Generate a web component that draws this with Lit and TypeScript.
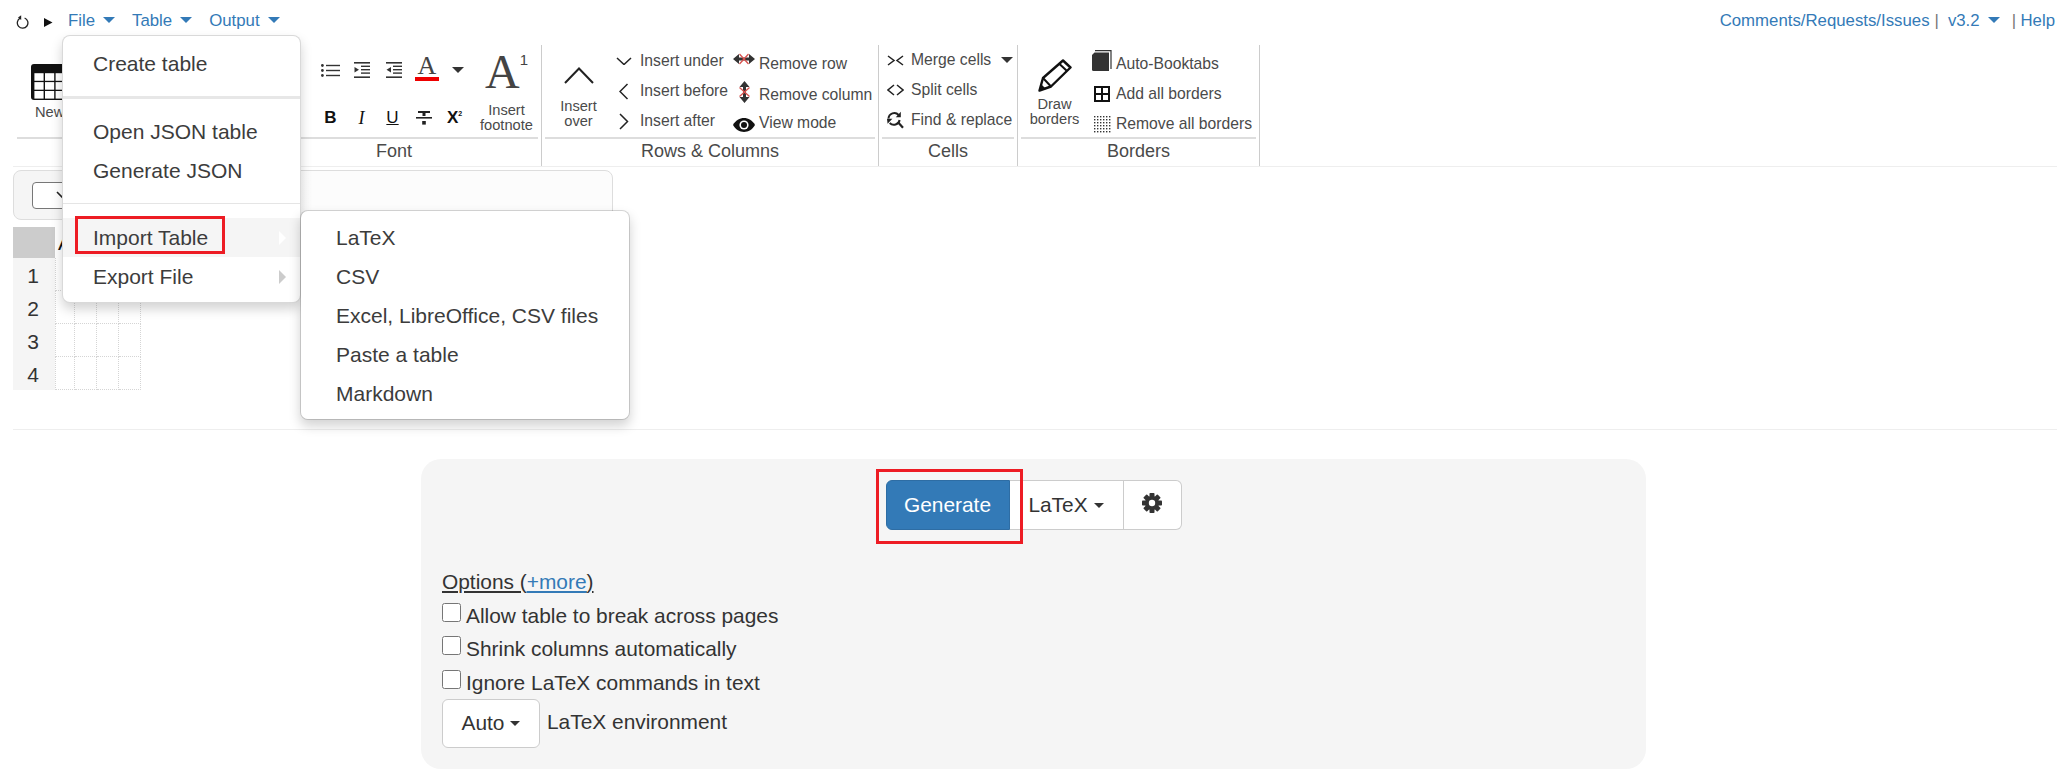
import { LitElement, html, svg, css } from "lit";
import { customElement } from "lit/decorators.js";

const stroke = "#222";

const chevron = (d: string, w: number, h: number, sw = 1.5) => html`<svg width=${w} height=${h} viewBox="0 0 ${w} ${h}">
  <path d=${d} fill="none" stroke=${stroke} stroke-width=${sw} />
</svg>`;

const caret = (cls = "") => html`<i class="caret ${cls}"></i>`;

const undoIcon = html`<svg width="13" height="14" viewBox="0 0 13 14">
  <path d="M4.2 3.2A5.3 5.3 0 1 0 8.6 3" fill="none" stroke="#222" stroke-width="1.3" />
  <path d="M5.2 0.3V5L2 2.6Z" fill="#222" />
</svg>`;

const playIcon = html`<svg width="9" height="9" viewBox="0 0 9 9"><path d="M0 0L8.5 4.5L0 9Z" fill="#111" /></svg>`;

const tableIcon = html`<svg width="46" height="36" viewBox="0 0 46 36">
  <rect width="46" height="36" rx="3" fill="#111" />
  ${[0, 1, 2, 3].map((c) =>
    [0, 1, 2].map(
      (r) => svg`<rect x=${3.4 + c * 10.6} y=${9.2 + r * 8.9} width="9.2" height="7.6" fill="#fff" />`
    )
  )}
</svg>`;

const listIcon = html`<svg width="19" height="13" viewBox="0 0 19 13">
  ${[1.5, 6.5, 11.5].map(
    (y) => svg`<circle cx="1.4" cy=${y} r="1.4" fill="#333" /><rect x="5" y=${y - 0.7} width="14" height="1.4" fill="#333" />`
  )}
</svg>`;

const indentLines = svg`
  <rect x="0" y="0" width="16" height="1.6" fill="#333" />
  <rect x="7" y="3.6" width="9" height="1.4" fill="#333" />
  <rect x="7" y="7" width="9" height="1.4" fill="#333" />
  <rect x="7" y="10.4" width="9" height="1.4" fill="#333" />
  <rect x="0" y="14.4" width="16" height="1.6" fill="#333" />
`;

const indentIcon = html`<svg width="16" height="16" viewBox="0 0 16 16">
  ${indentLines}<path d="M0.5 5L5 7.8L0.5 10.6Z" fill="#333" />
</svg>`;

const outdentIcon = html`<svg width="16" height="16" viewBox="0 0 16 16">
  ${indentLines}<path d="M5 5L0.5 7.8L5 10.6Z" fill="#333" />
</svg>`;

const strikeIcon = html`<svg width="16" height="15" viewBox="0 0 16 15">
  <rect x="2" y="0" width="12" height="2" fill="#222" />
  <rect x="6.5" y="2" width="3" height="3" fill="#222" />
  <rect x="0" y="6" width="16" height="1.6" fill="#222" />
  <rect x="6.2" y="10" width="3.6" height="3.6" fill="#222" />
</svg>`;

const removeRowIcon = html`<svg width="22" height="12" viewBox="0 0 22 12">
  <path d="M0 6L6 1V4.5H16V1L22 6L16 11V7.5H6V11Z" fill="#333" />
  <path d="M6.5 1L15.5 11M15.5 1L6.5 11" stroke="#d9534f" stroke-width="1.3" />
</svg>`;

const removeColIcon = html`<svg width="13" height="22" viewBox="0 0 13 22">
  <path d="M6.5 0L11.5 6H8V16H11.5L6.5 22L1.5 16H5V6H1.5Z" fill="#333" />
  <path d="M1.5 6.5L11.5 15.5M11.5 6.5L1.5 15.5" stroke="#d9534f" stroke-width="1.3" />
</svg>`;

const eyeIcon = html`<svg width="22" height="14" viewBox="0 0 22 14">
  <path d="M0 7C5 -2.2 17 -2.2 22 7C17 16.2 5 16.2 0 7Z" fill="#111" />
  <circle cx="11" cy="7" r="4.6" fill="#fff" />
  <circle cx="11" cy="7" r="3" fill="#111" />
</svg>`;

const findIcon = html`<svg width="17" height="18" viewBox="0 0 17 18">
  <path d="M1.5 7.5A5.8 5.8 0 0 1 11.6 4M12.6 9A5.8 5.8 0 0 1 2.7 12" fill="none" stroke="#222" stroke-width="2" />
  <path d="M13.8 0.8V6.2H8.8Z" fill="#222" />
  <path d="M0 7.8H5.4L0.6 12.8Z" fill="#222" />
  <path d="M10.8 11L16 16.8" stroke="#222" stroke-width="2.2" />
</svg>`;

const pencilIcon = html`<svg width="34" height="33" viewBox="0 0 34 33">
  <path d="M1.5 31.5L5 19L25 1.5L32.5 8.5L13 27.5Z" fill="none" stroke="#111" stroke-width="2.4" stroke-linejoin="round" />
  <path d="M21.5 5L29 12M5 19L13 27.5" fill="none" stroke="#111" stroke-width="2" />
  <path d="M1.5 31.5L3 25L8 30Z" fill="#111" />
</svg>`;

const bookIcon = html`<svg width="20" height="21" viewBox="0 0 20 21">
  <path d="M3 0.7H19V19" fill="none" stroke="#333" stroke-width="1.2" />
  <path d="M2.5 2.6H17V21H1.5A1.5 1.5 0 0 1 0 19.5V5Z" fill="#333" />
</svg>`;

const gridIcon = html`<svg width="16" height="16" viewBox="0 0 16 16">
  <path d="M1 1H15V15H1ZM8 1V15M1 8H15" fill="none" stroke="#111" stroke-width="2" />
</svg>`;

const dotsIcon = html`<svg width="17" height="17" viewBox="0 0 17 17">
  ${[0, 1, 2, 3, 4, 5].map((r) =>
    [0, 1, 2, 3, 4, 5].map(
      (c) => svg`<rect x=${c * 3} y=${r * 3} width="1.4" height="1.4" fill="#333" />`
    )
  )}
</svg>`;

const gearIcon = html`<svg width="20" height="20" viewBox="0 0 20 20">
  ${[0, 45, 90, 135].map(
    (a) => svg`<rect x="7.5" y="0" width="5" height="20" rx="0.8" fill="#333" transform="rotate(${a} 10 10)" />`
  )}
  <circle cx="10" cy="10" r="7" fill="#333" />
  <circle cx="10" cy="10" r="3.2" fill="#fff" />
</svg>`;

@customElement("app-root")
export class AppRoot extends LitElement {
  static styles = css`
    :host {
      display: block;
      position: relative;
      width: 2070px;
      height: 784px;
      overflow: hidden;
      background: #fff;
      color: #333;
      font-family: "Liberation Sans", Arial, sans-serif;
    }
    a {
      color: #337ab7;
      text-decoration: none;
    }
    i.caret {
      display: inline-block;
      width: 0;
      height: 0;
      border-style: solid;
      border-color: #333 transparent transparent;
      border-width: 6px 6px 0;
    }
    i.caret.blue {
      border-top-color: #337ab7;
      margin-left: 8px;
      vertical-align: 3px;
    }
    i.caret.sm {
      border-width: 5px 5px 0;
      margin-left: 6px;
      vertical-align: 3px;
    }

    /* top bar */
    .topbar {
      height: 45px;
      display: flex;
      align-items: flex-start;
      padding: 13px 15px 0 16px;
      box-sizing: border-box;
      font-size: 16.8px;
      line-height: 16px;
    }
    .undo {
      display: flex;
      margin: 2px 15px 0 0;
    }
    .play {
      display: flex;
      margin: 5px 15px 0 0;
    }
    .topmenu {
      display: flex;
      gap: 17px;
    }
    .topright {
      margin-left: auto;
      display: flex;
    }
    .sep {
      color: #777;
      margin: 0 9px 0 5px;
    }
    .sep.tight {
      margin: 0 4.5px 0 12px;
    }

    /* ribbon */
    .ribbon {
      display: flex;
      height: 121px;
      margin: 0 13px;
      border-bottom: 1px solid #eee;
      color: #4a4a4a;
    }
    .group {
      display: flex;
      flex-direction: column;
      box-sizing: border-box;
      padding: 0 3px;
      border-right: 1px solid #ccc;
      font-size: 15.7px;
    }
    .g-first {
      width: 237px;
      border-right: none;
      padding: 0 0 0 4px;
    }
    .g-font {
      width: 292px;
      padding-left: 0;
    }
    .g-rows {
      width: 337px;
    }
    .g-cells {
      width: 139px;
    }
    .g-borders {
      width: 242px;
    }
    .g-body {
      height: 92px;
      display: flex;
      border-bottom: 2px solid #ddd;
      box-sizing: content-box;
    }
    .g-label {
      text-align: center;
      font-size: 18px;
      line-height: 25px;
      height: 25px;
    }
    .newbtn {
      display: flex;
      flex-direction: column;
      padding: 19px 0 0 14px;
      font-size: 14.67px;
      line-height: 16px;
      gap: 4px;
    }
    .newbtn span {
      padding-left: 4px;
    }
    .font-left {
      display: flex;
      flex-direction: column;
      padding-left: 65px;
    }
    .font-row1 {
      display: flex;
      align-items: center;
      height: 47px;
      padding: 3px 0 0 6px;
      box-sizing: border-box;
    }
    .font-row1 .list {
      margin-right: 14px;
      display: flex;
    }
    .font-row1 .ind {
      margin-right: 16px;
      display: flex;
    }
    .color-a {
      width: 24px;
      margin: -6px 13px 0 -1px;
      font-family: "Liberation Serif", serif;
      font-size: 26px;
      line-height: 23px;
      text-align: center;
      color: #444;
      border-bottom: 4px solid #e00;
    }
    .font-row2 {
      display: grid;
      grid-template-columns: repeat(5, 31px);
      align-items: center;
      justify-items: center;
      height: 32px;
      margin-top: 10px;
      color: #111;
    }
    .b {
      font-weight: bold;
      font-size: 17px;
    }
    .it {
      font-family: "Liberation Serif", serif;
      font-style: italic;
      font-size: 18px;
    }
    .u {
      font-size: 17px;
      text-decoration: underline;
    }
    .x {
      font-weight: bold;
      font-size: 17px;
      line-height: 16px;
    }
    .x sup {
      font-size: 7px;
      line-height: 0;
      vertical-align: 7px;
    }
    .footnote {
      margin-left: 5px;
      width: 66px;
      text-align: center;
      font-size: 14.67px;
      line-height: 15px;
      display: flex;
      flex-direction: column;
    }
    .bigA {
      height: 56px;
      display: flex;
      justify-content: center;
      font-family: "Liberation Serif", serif;
      font-size: 48px;
      line-height: 50px;
      color: #444;
      padding-top: 2px;
    }
    .bigA sup {
      font-family: "Liberation Sans", sans-serif;
      font-size: 15px;
      line-height: 26px;
    }
    .bigbtn {
      width: 67px;
      display: flex;
      flex-direction: column;
      align-items: center;
      text-align: center;
      font-size: 14.67px;
      line-height: 15px;
    }
    .bigicon {
      display: flex;
      align-items: flex-end;
    }
    .bigicon.over {
      padding-bottom: 15px;
      height: 39px;
    }
    .bigicon.draw {
      padding-bottom: 5px;
      height: 47px;
    }
    .col {
      display: grid;
      align-content: start;
    }
    .col-insert {
      width: 116px;
      padding-top: 1px;
      grid-template-rows: 30px 30px 30px;
    }
    .col-remove {
      padding-top: 3px;
      margin-left: 4px;
      grid-template-rows: 31px 31px 26px;
    }
    .col-cells {
      padding-top: 0;
      grid-template-rows: 30px 30px 30px;
    }
    .col-borders {
      padding-top: 4px;
      grid-template-rows: 30px 30px 30px;
    }
    .row {
      display: flex;
      align-items: center;
      white-space: nowrap;
    }
    .ic {
      flex: none;
      display: flex;
      justify-content: center;
      align-items: center;
    }
    .ic24 {
      width: 24px;
      margin-right: 4px;
    }
    .ic-rem {
      width: 24px;
      margin-right: 3px;
    }
    .ic-cell {
      width: 26px;
      margin-right: 3px;
    }
    .ic-bord {
      width: 28px;
    }
    .raise4 {
      margin-bottom: 9px;
    }
    .raise5 {
      margin-bottom: 5px;
    }
    .lower3 {
      margin-top: 3px;
    }
    .raise7 {
      margin-bottom: 7px;
    }
    .merge-caret {
      margin-left: 10px;
      border-width: 6px 6px 0;
    }

    /* sheet */
    .sheetbar {
      margin: 3px 0 0 13px;
      width: 600px;
      height: 50px;
      box-sizing: border-box;
      border: 1px solid #ddd;
      border-radius: 8px;
      background: linear-gradient(to right, #f5f5f5 60px, #fcfcfc 300px);
      display: flex;
      align-items: center;
      padding-left: 18px;
    }
    .cellselect {
      width: 60px;
      height: 27px;
      box-sizing: border-box;
      border: 1px solid #777;
      border-radius: 4px;
      background: #fff;
      display: flex;
      align-items: center;
      justify-content: center;
    }
    .grid {
      margin: 7px 0 0 13px;
      display: grid;
      grid-template-columns: 42px 20px 22px 22px 22px;
      grid-template-rows: 31px repeat(4, 33px);
      width: 128px;
      font-size: 21px;
    }
    .corner {
      background: #ccc;
    }
    .colhead {
      text-align: center;
      line-height: 31px;
      color: #111;
    }
    .rownum {
      background: #f5f5f5;
      text-align: center;
      line-height: 35px;
      padding-right: 2px;
    }
    .cell {
      border-right: 1px dotted #d5d5d5;
      border-bottom: 1px dotted #d5d5d5;
      box-sizing: border-box;
    }
    .cell.first {
      border-left: 1px dotted #d5d5d5;
    }
    .rule {
      margin: 39px 13px 0;
      border-top: 1px solid #eee;
    }

    /* generate panel */
    .panel {
      margin: 29px 0 0 421px;
      width: 1225px;
      height: 310px;
      box-sizing: border-box;
      padding: 21px 21px 0;
      border-radius: 20px;
      background: #f5f5f5;
      font-size: 20.9px;
    }
    .actions {
      display: flex;
      justify-content: center;
      height: 50px;
    }
    .actions-inner {
      position: relative;
      display: flex;
      height: 50px;
    }
    .btn {
      box-sizing: border-box;
      border: 1px solid #ccc;
      background: #fff;
      height: 50px;
      display: flex;
      align-items: center;
      justify-content: center;
      font-size: 20.9px;
      color: #333;
    }
    .primary {
      width: 124px;
      background: #337ab7;
      border-color: #2e6da4;
      border-radius: 6px 0 0 6px;
      color: #fff;
    }
    .mid {
      width: 114px;
      border-left: none;
    }
    .last {
      width: 58px;
      border-left: none;
      border-radius: 0 6px 6px 0;
      padding-bottom: 4px;
    }
    .redbox {
      position: absolute;
      border: 3px solid #ed1c24;
      box-sizing: border-box;
      pointer-events: none;
    }
    .redbox.gen {
      left: -10px;
      top: -11px;
      width: 147px;
      height: 75px;
    }
    .opts-title {
      margin-top: 39px;
      line-height: 26px;
      text-decoration: underline;
    }
    .opt {
      display: flex;
      height: 33.3px;
      align-items: flex-start;
      gap: 5px;
    }
    .opt input {
      width: 19px;
      height: 19px;
      margin: 0;
      flex: none;
    }
    .opt span {
      line-height: 26px;
    }
    .opts-list {
      margin-top: 8px;
    }
    .env {
      display: flex;
      gap: 7px;
      margin-top: -4px;
    }
    .auto {
      width: 98px;
      height: 49px;
      border-radius: 6px;
    }
    .env span {
      line-height: 46px;
    }

    /* menus */
    .menu {
      position: absolute;
      box-sizing: border-box;
      background: #fff;
      border: 1px solid rgba(0, 0, 0, 0.15);
      border-radius: 8px;
      box-shadow: 0 6px 12px rgba(0, 0, 0, 0.175);
      font-size: 21px;
      color: #3c3c3c;
    }
    .filemenu {
      left: 62px;
      top: 35px;
      width: 239px;
      height: 268px;
      padding-top: 7.5px;
    }
    .submenu {
      left: 237px;
      top: -8px;
      width: 330px;
      height: 210px;
      padding-top: 7.5px;
      background-clip: padding-box;
    }
    .item {
      position: relative;
      height: 39px;
      line-height: 39px;
      padding-left: 30px;
      white-space: nowrap;
    }
    .submenu .item {
      padding-left: 35px;
    }
    .item.active {
      background: #f5f5f5;
    }
    .divider {
      margin: 13.5px 0;
      height: 1px;
      background: #e5e5e5;
    }
    .divider.thick {
      height: 3px;
      margin: 13px 0;
      background: #e7e7e7;
    }
    .arrow {
      position: absolute;
      right: 14px;
      top: 13px;
      width: 0;
      height: 0;
      border-style: solid;
      border-width: 7px 0 7px 7px;
      border-color: transparent transparent transparent #ccc;
    }
    .item.active .arrow {
      border-left-color: #fff;
    }
    .redbox.imp {
      left: 12px;
      top: -2px;
      width: 150px;
      height: 38px;
    }
  `;

  render() {
    return html`
      <div class="topbar">
        <span class="undo">${undoIcon}</span>
        <span class="play">${playIcon}</span>
        <div class="topmenu">
          <a href="#">File<i class="caret blue"></i></a>
          <a href="#">Table<i class="caret blue"></i></a>
          <a href="#">Output<i class="caret blue"></i></a>
        </div>
        <div class="topright">
          <a href="#">Comments/Requests/Issues</a>
          <span class="sep">|</span>
          <a href="#">v3.2<i class="caret blue"></i></a>
          <span class="sep tight">|</span>
          <a href="#">Help</a>
        </div>
      </div>

      <div class="ribbon">
        <div class="group g-first">
          <div class="g-body">
            <div class="newbtn">${tableIcon}<span>New</span></div>
          </div>
          <div class="g-label"></div>
        </div>

        <div class="group g-font">
          <div class="g-body">
            <div class="font-left">
              <div class="font-row1">
                <span class="list">${listIcon}</span>
                <span class="ind">${indentIcon}</span>
                <span class="ind" style="margin-right:14px">${outdentIcon}</span>
                <span class="color-a">A</span>
                ${caret()}
              </div>
              <div class="font-row2">
                <span class="b">B</span>
                <span class="it">I</span>
                <span class="u">U</span>
                ${strikeIcon}
                <span class="x">X<sup>2</sup></span>
              </div>
            </div>
            <div class="footnote">
              <div class="bigA">A<sup>1</sup></div>
              <span>Insert</span>
              <span>footnote</span>
            </div>
          </div>
          <div class="g-label">Font</div>
        </div>

        <div class="group g-rows">
          <div class="g-body">
            <div class="bigbtn">
              <div class="bigicon over">${chevron("M1 16L15 1.5L29 16", 30, 17, 2)}</div>
              <span>Insert</span>
              <span>over</span>
            </div>
            <div class="col col-insert">
              <div class="row">
                <span class="ic ic24">${chevron("M1 1L8 7.5L15 1", 16, 8)}</span>Insert under
              </div>
              <div class="row">
                <span class="ic ic24">${chevron("M8.5 1L1 8.5L8.5 16", 10, 17)}</span>Insert before
              </div>
              <div class="row">
                <span class="ic ic24">${chevron("M1 1L8.5 8.5L1 16", 10, 17)}</span>Insert after
              </div>
            </div>
            <div class="col col-remove">
              <div class="row"><span class="ic ic-rem raise4">${removeRowIcon}</span>Remove row</div>
              <div class="row"><span class="ic ic-rem raise5">${removeColIcon}</span>Remove column</div>
              <div class="row"><span class="ic ic-rem lower3">${eyeIcon}</span>View mode</div>
            </div>
          </div>
          <div class="g-label">Rows &amp; Columns</div>
        </div>

        <div class="group g-cells">
          <div class="g-body">
            <div class="col col-cells">
              <div class="row">
                <span class="ic ic-cell">${chevron("M1 1L7 5.5L1 10M16 1L10 5.5L16 10", 17, 11)}</span>Merge cells${caret(
                  "merge-caret"
                )}
              </div>
              <div class="row">
                <span class="ic ic-cell">${chevron("M7 1L1 6L7 11M10 1L16 6L10 11", 17, 12)}</span>Split cells
              </div>
              <div class="row"><span class="ic ic-cell">${findIcon}</span>Find &amp; replace</div>
            </div>
          </div>
          <div class="g-label">Cells</div>
        </div>

        <div class="group g-borders">
          <div class="g-body">
            <div class="bigbtn">
              <div class="bigicon draw">${pencilIcon}</div>
              <span>Draw</span>
              <span>borders</span>
            </div>
            <div class="col col-borders">
              <div class="row"><span class="ic ic-bord raise7">${bookIcon}</span>Auto-Booktabs</div>
              <div class="row"><span class="ic ic-bord">${gridIcon}</span>Add all borders</div>
              <div class="row"><span class="ic ic-bord">${dotsIcon}</span>Remove all borders</div>
            </div>
          </div>
          <div class="g-label">Borders</div>
        </div>
      </div>

      <div class="sheetbar">
        <div class="cellselect">
          ${chevron("M1 1L6.5 6.5L12 1", 13, 8, 1.6)}
        </div>
      </div>

      <div class="grid">
        <div class="corner"></div>
        <div class="colhead">A</div>
        <div class="colhead"></div>
        <div class="colhead"></div>
        <div class="colhead"></div>
        ${[1, 2, 3, 4].map(
          (n) => html`
            <div class="rownum">${n}</div>
            <div class="cell first"></div>
            <div class="cell"></div>
            <div class="cell"></div>
            <div class="cell"></div>
          `
        )}
      </div>

      <div class="rule"></div>

      <div class="panel">
        <div class="actions">
          <div class="actions-inner">
            <div class="btn primary">Generate</div>
            <div class="btn mid">LaTeX${caret("sm")}</div>
            <div class="btn last">${gearIcon}</div>
            <div class="redbox gen"></div>
          </div>
        </div>
        <div class="opts-title">Options (<a href="#" style="text-decoration:underline">+more</a>)</div>
        <div class="opts-list">
          <label class="opt"><input type="checkbox" /><span>Allow table to break across pages</span></label>
          <label class="opt"><input type="checkbox" /><span>Shrink columns automatically</span></label>
          <label class="opt"><input type="checkbox" /><span>Ignore LaTeX commands in text</span></label>
        </div>
        <div class="env">
          <div class="btn auto">Auto${caret("sm")}</div>
          <span>LaTeX environment</span>
        </div>
      </div>

      <div class="menu filemenu">
        <div class="item">Create table</div>
        <div class="divider thick"></div>
        <div class="item">Open JSON table</div>
        <div class="item">Generate JSON</div>
        <div class="divider"></div>
        <div class="item active">
          Import Table
          <i class="arrow"></i>
          <div class="redbox imp"></div>
          <div class="menu submenu">
            <div class="item">LaTeX</div>
            <div class="item">CSV</div>
            <div class="item">Excel, LibreOffice, CSV files</div>
            <div class="item">Paste a table</div>
            <div class="item">Markdown</div>
          </div>
        </div>
        <div class="item">Export File<i class="arrow"></i></div>
      </div>
    `;
  }
}
